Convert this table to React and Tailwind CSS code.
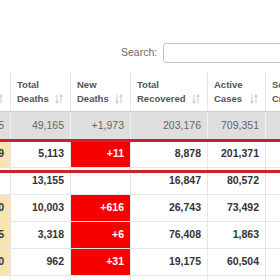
import React from "react";

const widths = [61, 60, 60, 77, 58, 80];
const wcls = ["w-[61px]", "w-[60px]", "w-[60px]", "w-[77px]", "w-[58px]", "w-[80px]"];

function SortIcon() {
  return (
    <svg width="8" height="10" viewBox="0 0 8 10" className="shrink-0">
      <g stroke="#cfcfcf" strokeWidth="1.1" fill="none">
        <path d="M2 0.5v8.5M0.6 7.2L2 9l1.4-1.8" />
        <path d="M6 9.5V1M4.6 2.8L6 1l1.4 1.8" />
      </g>
    </svg>
  );
}

const headers = [
  ["New", "Cases"],
  ["Total", "Deaths"],
  ["New", "Deaths"],
  ["Total", "Recovered"],
  ["Active", "Cases"],
  ["Serious,", "Critical"],
];

const rows = [
  { vals: ["", "13,155", "", "16,847", "80,572", ""], yellow: false, red: false },
  { vals: ["0", "10,003", "+616", "26,743", "73,492", ""], yellow: true, red: true },
  { vals: ["5", "3,318", "+6", "76,408", "1,863", ""], yellow: true, red: true },
  { vals: ["0", "962", "+31", "19,175", "60,504", ""], yellow: true, red: true },
  { vals: ["", "", "", "", "", ""], yellow: false, red: false },
];

function Cell({ i, children, className = "" }) {
  return (
    <div
      className={`${wcls[i]} shrink-0 h-full border-r border-[#e6e6e6] flex items-center justify-end pr-[6px] ${className}`}
    >
      {children}
    </div>
  );
}

export default function App() {
  return (
    <div
      className="relative w-[280px] h-[280px] overflow-hidden bg-white"
      style={{ fontFamily: '"Liberation Sans", Arial, sans-serif' }}
    >
      <div className="flex items-center pl-[121px] pt-[43px] h-[63px]">
        <span className="text-[10.5px] text-[#6a6a6a] shrink-0">Search:</span>
        <div className="ml-[6px] w-[150px] h-[20px] shrink-0 border border-[#c4c4c4] rounded-[3px] bg-white" />
      </div>

      <div className="mt-[9px] ml-[-50px] w-max">
        {/* header */}
        <div className="flex h-[40px] border-b border-[#cfcfcf]">
          {headers.map((h, i) => (
            <div
              key={i}
              className={`${wcls[i]} shrink-0 h-full border-r border-[#e6e6e6] flex items-center justify-between pl-[6px] pr-[7px]`}
            >
              <div className="text-[9.5px] leading-[14px] font-bold text-[#555]">
                <div>{h[0]}</div>
                <div>{h[1]}</div>
              </div>
              <div className="mt-[14px]">
                <SortIcon />
              </div>
            </div>
          ))}
        </div>

        {/* total row */}
        <div className="flex h-[28px] bg-[#dedede] text-[10.5px] text-[#666]">
          {["5", "49,165", "+1,973", "203,176", "709,351", ""].map((v, i) => (
            <Cell key={i} i={i} className="border-[#f0f0f0]">
              {v}
            </Cell>
          ))}
        </div>

        {/* highlighted row */}
        <div className="flex h-[27px] border-t border-[#e6e6e6] text-[10.5px] font-bold text-[#333]">
          {["9", "5,113", "+11", "8,878", "201,371", ""].map((v, i) => (
            <Cell
              key={i}
              i={i}
              className={
                i === 0 ? "bg-[#f8e4b0]" : i === 2 ? "bg-[#f70000] text-white" : ""
              }
            >
              {v}
            </Cell>
          ))}
        </div>

        {rows.map((r, ri) => (
          <div
            key={ri}
            className="flex h-[27px] border-t border-[#e6e6e6] text-[10.5px] font-bold text-[#333]"
          >
            {r.vals.map((v, i) => (
              <Cell
                key={i}
                i={i}
                className={
                  i === 0 && r.yellow
                    ? "bg-[#f8e4b0]"
                    : i === 2 && r.red
                    ? "bg-[#f70000] text-white"
                    : ""
                }
              >
                {v}
              </Cell>
            ))}
          </div>
        ))}
      </div>

      {/* red highlight frame */}
      <div className="absolute left-[-6px] right-[-6px] top-[139px] h-[34px] border-[3px] border-[#c8232c] pointer-events-none" />
    </div>
  );
}
